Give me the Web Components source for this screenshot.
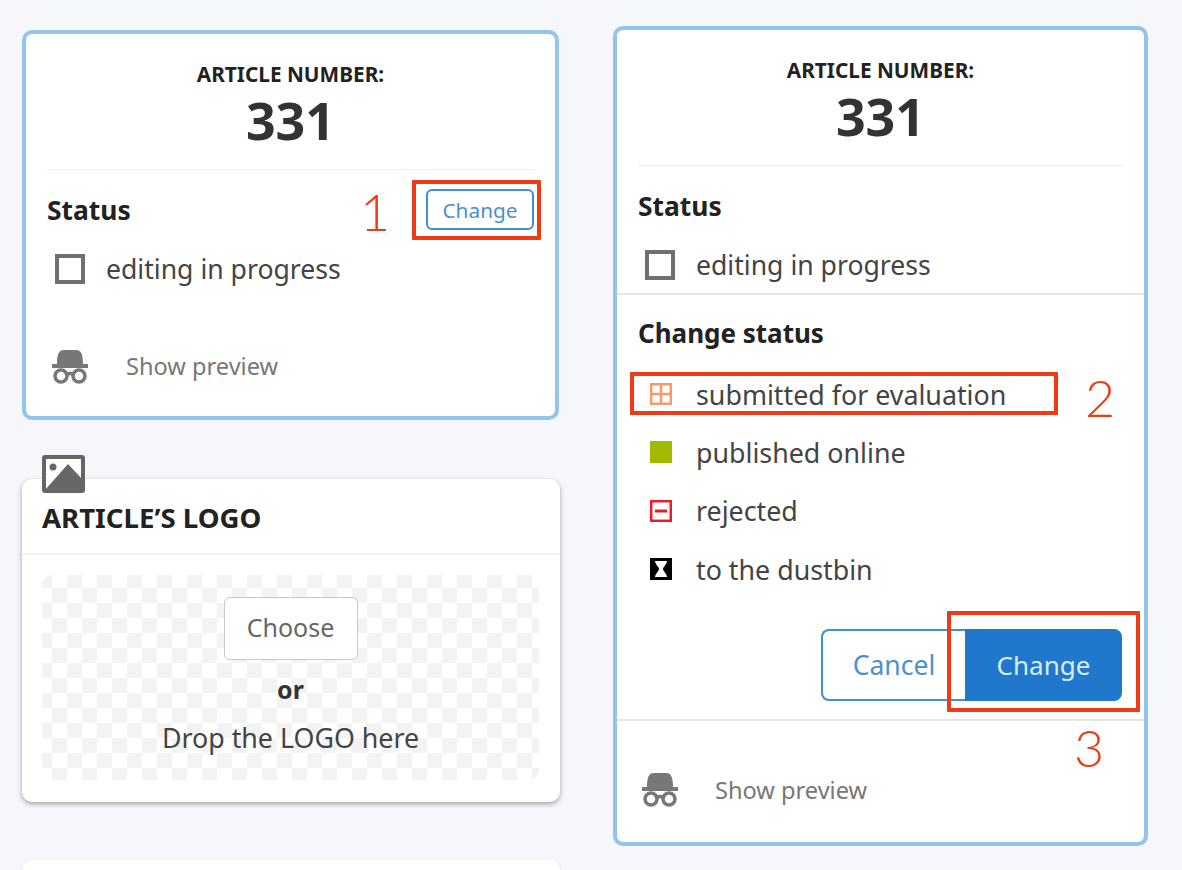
<!DOCTYPE html>
<html lang="en">
<head>
<meta charset="utf-8">
<title>Article status</title>
<style>
  html, body { margin: 0; height: 870px; overflow: hidden; background: #f6f7fa; }
  body { font-family: "Noto Sans", "Open Sans", sans-serif; color: #333; }
</style>
</head>
<body>

<app-page>
  <div slot="left">
    <article-card style="margin-top:30px" width="537" height="390">
      <status-block>
        <ui-button slot="action" size="small">Change</ui-button>
      </status-block>
      <preview-link></preview-link>
      <red-mark style="left:386px;top:146px;width:121px;height:52px"></red-mark>
      <red-digit style="left:334px;top:151px">1</red-digit>
    </article-card>
    <logo-card></logo-card>
    <blank-card></blank-card>
  </div>
  <div slot="right">
    <article-card style="margin-top:26px" width="535" height="820">
      <status-block style="--row-left:7px"></status-block>
      <change-status></change-status>
      <preview-link divided></preview-link>
      <red-mark style="left:13px;top:342px;width:420px;height:35px"></red-mark>
      <red-mark style="left:330px;top:581px;width:185px;height:93px"></red-mark>
      <red-digit style="left:468px;top:341px">2</red-digit>
      <red-digit style="left:457px;top:691px">3</red-digit>
    </article-card>
  </div>
</app-page>

<script>
const CHANGE_ITEMS = [
  { icon: 'grid', label: 'submitted for evaluation' },
  { icon: 'solid', label: 'published online' },
  { icon: 'minus', label: 'rejected' },
  { icon: 'hourglass', label: 'to the dustbin' }
];

const STATUS_ICONS = {
  grid: `<svg width="22" height="22" viewBox="0 0 22 22"><path fill="none" stroke="#f59a6c" stroke-width="2.500" d="M1.200 1.200h19.600v19.600H1.200zM11 1v20M1 11h20"/></svg>`,
  solid: `<svg width="22" height="22" viewBox="0 0 22 22"><rect width="22" height="22" fill="#a2bb00"/></svg>`,
  minus: `<svg width="22" height="22" viewBox="0 0 22 22"><rect x="1.200" y="1.200" width="19.600" height="19.600" fill="#fff" stroke="#ee1c25" stroke-width="2.500"/><rect x="5" y="9.500" width="12" height="3" fill="#ee1c25"/></svg>`,
  hourglass: `<svg width="22" height="22" viewBox="0 0 22 22"><rect width="22" height="22" fill="#000"/><path fill="#fff" d="M5 3h12c0 3-4 6-4 8s4 5 4 8H5c0-3 4-6 4-8s-4-5-4-8z"/></svg>`
};

class AppPage extends HTMLElement {
  constructor() {
    super();
    this.attachShadow({ mode: 'open' });
    this.shadowRoot.innerHTML = `
      <style>
        :host { display: grid; grid-template-columns: 538px 535px; column-gap: 53px; padding-left: 22px; }
      </style>
      <slot name="left"></slot>
      <slot name="right"></slot>
    `;
  }
}

class ArticleCard extends HTMLElement {
  constructor() {
    super();
    this.attachShadow({ mode: 'open' });
  }

  connectedCallback() {
    const h = this.getAttribute('height');
    const w = this.getAttribute('width');
    this.shadowRoot.innerHTML = `
      <style>
        :host { display: block; position: relative; box-sizing: border-box; height: ${h}px; width: ${w}px;
                background: #fff; border: 4px solid #93c4ee; border-radius: 10px; }
        header { display: flex; flex-direction: column; align-items: center; margin: 0 21px; height: 136px;
                 border-bottom: 1px solid #eee; box-sizing: border-box; padding-top: 26px; }
        .label { font-size: 20.800px; font-weight: 700; line-height: 28px; color: #222; }
        .num { font-size: 52px; font-weight: 700; line-height: 62px; color: #333; margin-top: 1px; }
      </style>
      <header>
        <span class="label">ARTICLE NUMBER:</span>
        <span class="num">331</span>
      </header>
      <slot></slot>
    `;
  }
}

class StatusBlock extends HTMLElement {
  constructor() {
    super();
    this.attachShadow({ mode: 'open' });
    this.shadowRoot.innerHTML = `
      <style>
        :host { display: block; padding: 19px 21px 0; }
        .head { display: flex; justify-content: space-between; align-items: center; height: 41px; }
        h3 { margin: 0; font-size: 26.400px; font-weight: 700; color: #222; }
        .row { display: flex; align-items: center; gap: 21px; margin: 24px 0 0 var(--row-left, 8px); height: 30px; }
        .box { box-sizing: border-box; width: 30px; height: 30px; border: 4px solid #707070; }
        .text { font-size: 26.600px; color: #444; }
      </style>
      <div class="head"><h3>Status</h3><slot name="action"></slot></div>
      <div class="row"><span class="box"></span><span class="text">editing in progress</span></div>
    `;
  }
}

class UiButton extends HTMLElement {
  constructor() {
    super();
    this.attachShadow({ mode: 'open' });
  }

  connectedCallback() {
    const small = this.getAttribute('size') === 'small';
    this.shadowRoot.innerHTML = `
      <style>
        :host { display: inline-flex; box-sizing: border-box; align-items: center; justify-content: center;
                width: ${small ? 108 : 144}px; height: ${small ? 41 : 72}px; font-size: ${small ? 20.800 : 26.500}px;
                background: #fff; color: #4a90d2; border: 2px solid #3f8fd6; border-radius: 6px; }
        :host([variant="primary"]) { background: #2078cc; color: #d9ecfb; border-color: #2078cc;
                                     border-radius: 0 8px 8px 0; width: 157px; font-size: 26px; }
        :host([variant="ghost"]) { border-radius: 8px 0 0 8px; border-right: 0; }
      </style>
      <slot></slot>
    `;
  }
}

class ChangeStatus extends HTMLElement {
  constructor() {
    super();
    this.attachShadow({ mode: 'open' });
    const rows = CHANGE_ITEMS.map(item => `
      <li><span class="ic">${STATUS_ICONS[item.icon]}</span><span>${item.label}</span></li>`).join('');
    this.shadowRoot.innerHTML = `
      <style>
        :host { display: block; margin-top: 13px; border-top: 2px solid #e4e6e8; padding: 0 22px 0 21px; height: 426px; box-sizing: border-box; }
        h3 { margin: 21px 0 0; font-size: 26px; font-weight: 700; line-height: 34px; color: #222; }
        ul { list-style: none; margin: 15px 0 0; padding: 0; }
        li { display: flex; align-items: center; height: 58.300px; font-size: 26.800px; color: #444; }
        .ic { display: flex; width: 22px; margin: 0 24px 0 12px; }
        .btns { display: flex; justify-content: flex-end; margin-top: 31px; }
      </style>
      <h3>Change status</h3>
      <ul>${rows}</ul>
      <div class="btns">
        <ui-button variant="ghost">Cancel</ui-button>
        <ui-button variant="primary">Change</ui-button>
      </div>
    `;
  }
}

class PreviewLink extends HTMLElement {
  constructor() {
    super();
    this.attachShadow({ mode: 'open' });
    this.shadowRoot.innerHTML = `
      <style>
        :host { display: flex; align-items: center; gap: 37px; padding: 0 0 0 25px; margin-top: 64px; height: 36px; font-size: 23.600px; color: #777; }
        :host([divided]) { margin-top: 0; height: 121px; border-top: 2px solid #e4e6e8; box-sizing: border-box; padding: 18px 0 0 24px; gap: 36px; }
        svg { display: block; }
      </style>
      <svg width="38" height="35" viewBox="0 0 38 35" fill="#777">
        <path d="M6 15 C6 5 8 1 13 1 H25 C30 1 32 5 32 15 H37 V19 H1 V15 Z"/>
        <g fill="none" stroke="#777" stroke-width="3.500">
          <circle cx="10" cy="27" r="6"/>
          <circle cx="28" cy="27" r="6"/>
          <path d="M15 25.500 Q19 23.500 23 25.500"/>
        </g>
      </svg>
      <span>Show preview</span>
    `;
  }
}

class LogoCard extends HTMLElement {
  constructor() {
    super();
    this.attachShadow({ mode: 'open' });
    this.shadowRoot.innerHTML = `
      <style>
        :host { display: block; position: relative; box-sizing: border-box; margin-top: 59px; height: 323px;
                background: #fff; border-radius: 10px; box-shadow: 0 2px 5px rgba(0,0,0,.35); }
        .pic { position: absolute; left: 20px; top: -24px; display: block; }
        h2 { margin: 0; height: 76px; box-sizing: border-box; padding: 20px 20px 0; font-size: 27.600px; line-height: 36px;
             font-weight: 700; color: #222; border-bottom: 2px solid #f0f1f3; }
        .drop { display: flex; flex-direction: column; align-items: center; box-sizing: border-box;
                margin: 20px 21px 0 20px; height: 205px; padding-top: 22px; border-radius: 10px;
                background: repeating-conic-gradient(#f3f3f3 0 25%, #fff 0 50%) 10px -2px / 30px 30px; }
        .choose { box-sizing: border-box; width: 134px; height: 63px; display: flex; align-items: center; justify-content: center;
                  padding-bottom: 3px; background: #fff; border: 1px solid #c8c8c8; border-radius: 6px; font-size: 25px; color: #666; }
        .or { font-size: 25px; font-weight: 700; color: #333; margin-top: 11px; line-height: 36px; }
        .hint { font-size: 26.800px; color: #444; margin-top: 13px; line-height: 36px; }
      </style>
      <svg class="pic" width="43" height="38" viewBox="0 0 43 38">
        <rect x="2" y="2" width="39" height="34" rx="1" fill="#fff" stroke="#666" stroke-width="4"/>
        <circle cx="11" cy="12" r="3.500" fill="#666"/>
        <path fill="#666" d="M3 35 L26 9 L41 25 V36 H3 Z"/>
      </svg>
      <h2>ARTICLE’S LOGO</h2>
      <div class="drop">
        <div class="choose">Choose</div>
        <div class="or">or</div>
        <div class="hint">Drop the LOGO here</div>
      </div>
    `;
  }
}

class BlankCard extends HTMLElement {
  constructor() {
    super();
    this.attachShadow({ mode: 'open' });
    this.shadowRoot.innerHTML = `
      <style>
        :host { display: block; margin-top: 58px; height: 10px; background: #fff; border-radius: 10px 10px 0 0; box-shadow: 0 1px 3px rgba(0,0,0,.12); }
      </style>
    `;
  }
}

// the red annotations sit over the screenshot
class RedMark extends HTMLElement {
  constructor() {
    super();
    this.attachShadow({ mode: 'open' });
    this.shadowRoot.innerHTML = `
      <style>
        :host { display: block; position: absolute; border: 4px solid #ef3a16; border-radius: 1px; pointer-events: none; }
      </style>
    `;
  }
}

class RedDigit extends HTMLElement {
  constructor() {
    super();
    this.attachShadow({ mode: 'open' });
    this.shadowRoot.innerHTML = `
      <style>
        :host { display: block; position: absolute; font-family: "Lato", sans-serif; font-weight: 300; font-size: 52px; line-height: 52px; color: #ef3a16; }
      </style>
      <slot></slot>
    `;
  }
}

customElements.define('app-page', AppPage);
customElements.define('article-card', ArticleCard);
customElements.define('status-block', StatusBlock);
customElements.define('ui-button', UiButton);
customElements.define('change-status', ChangeStatus);
customElements.define('preview-link', PreviewLink);
customElements.define('logo-card', LogoCard);
customElements.define('blank-card', BlankCard);
customElements.define('red-mark', RedMark);
customElements.define('red-digit', RedDigit);
</script>
</body>
</html>
